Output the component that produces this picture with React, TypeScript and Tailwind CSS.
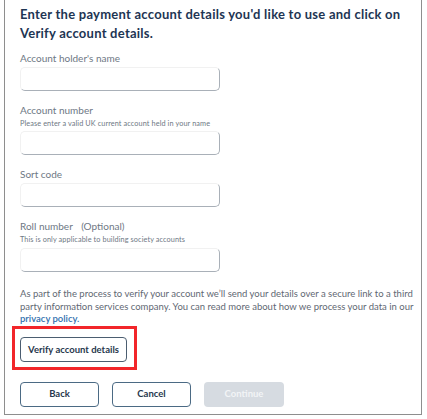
export default function App() {
  const inputCls =
    "block w-[200px] h-[24px] rounded-[5px] border border-t-[#f1f1f1] border-l-[#f1f1f1] border-r-[#a9b0b8] border-b-[#a9b0b8] bg-white";
  const labelCls = "text-[10px] leading-[14px] text-[#6e7884]";
  const hintCls = "text-[7.3px] leading-[10px] text-[#6e7884] tracking-[0.1px]";
  const btnCls =
    "w-[79px] h-[25px] rounded-[4px] border border-[#4b6a84] text-[9.5px] font-bold text-[#27384d]";
  return (
    <div className="w-[427px] h-[419px] bg-white font-['Lato',sans-serif]">
      <div className="ml-[4px] w-[418px] h-[415px] border-x-[1.5px] border-b-[1.5px] border-[#8e8e8e] pl-[15px] pt-[5px]">
        <h1 className="text-[13px] leading-[19px] font-bold text-[#1e3553] tracking-[0.25px]">
          <span className="block whitespace-nowrap">
            Enter the payment account details you'd like to use and click on
          </span>
          <span className="block">Verify account details.</span>
        </h1>

        <div className={`mt-[8px] ${labelCls}`}>Account holder's name</div>
        <div className="mt-[2px]">
          <div className={inputCls} />
        </div>

        <div className={`mt-[12px] ${labelCls}`}>Account number</div>
        <div className={`mt-[2px] ${hintCls}`}>
          Please enter a valid UK current account held in your name
        </div>
        <div className="mt-[2px]">
          <div className={inputCls} />
        </div>

        <div className={`mt-[12px] ${labelCls}`}>Sort code</div>
        <div className="mt-[2px]">
          <div className={inputCls} />
        </div>

        <div className={`mt-[12px] ${labelCls}`}>
          Roll number <span className="ml-[6px]">(Optional)</span>
        </div>
        <div className={`mt-[2px] ${hintCls}`}>
          This is only applicable to building society accounts
        </div>
        <div className="mt-[3px]">
          <div className={inputCls} />
        </div>

        <p className="mt-[16px] pr-[6px] text-[9.5px] leading-[12.5px] text-[#5f6873]">
          As part of the process to verify your account we’ll send your details
          over a secure link to a third party information services company. You
          can read more about how we process your data in our{" "}
          <span className="font-semibold text-[#2f6fae]">privacy policy.</span>
        </p>

        <div className="mt-0 -ml-[8px] w-[125px] h-[44px] border-[3px] border-[#f2262a] pl-[5px] pt-[6px]">
          <button className="w-[107px] h-[25px] rounded-[4px] border border-[#4b5d70] text-[9.5px] font-bold text-[#27384d]">
            Verify account details
          </button>
        </div>

        <div className="mt-[12px] flex gap-[13px]">
          <button className={btnCls}>Back</button>
          <button className={btnCls}>Cancel</button>
          <button className="w-[80px] h-[25px] rounded-[4px] bg-[#d6dbe1] text-[9.5px] font-bold text-[#f2f4f6]">
            Continue
          </button>
        </div>
      </div>
    </div>
  );
}
